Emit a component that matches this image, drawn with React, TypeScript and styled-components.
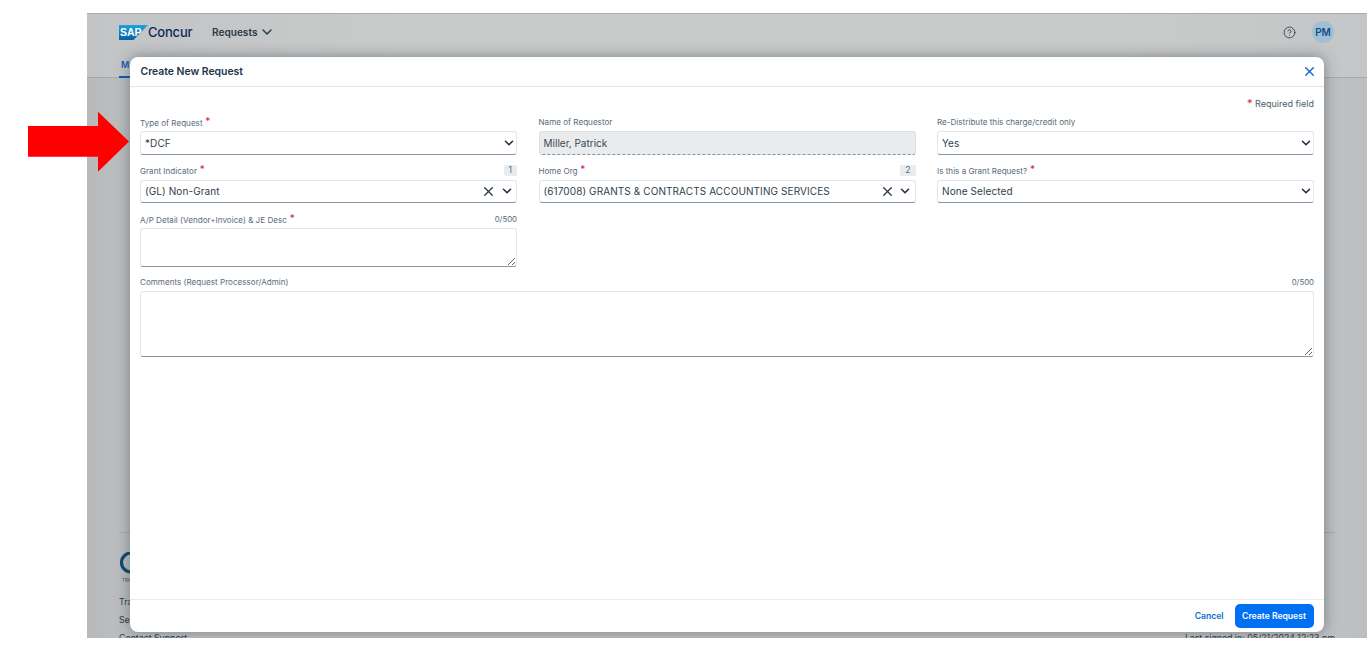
import React from "react";
import styled, { createGlobalStyle } from "styled-components";
import { ChevronDown, X, CircleHelp } from "lucide-react";

const GlobalStyle = createGlobalStyle`
    html, body {
        margin: 0;
        padding: 0;
        background: #ffffff;
        font-family: "Inter", "Liberation Sans", sans-serif;
    }
`;

const Field = ({
    label,
    required,
    note,
    children,
}: {
    label: string;
    required?: boolean;
    note?: React.ReactNode;
    children: React.ReactNode;
}) => (
    <FieldWrap>
        <LabelRow>
            <Label>
                {label}
                {required && <Star> *</Star>}
            </Label>
            {note}
        </LabelRow>
        {children}
    </FieldWrap>
);

const Select = ({ value, clearable }: { value: string; clearable?: boolean }) => (
    <SelectBox $clearable={clearable}>
        <SelectValue>{value}</SelectValue>
        {clearable && <X size={15} strokeWidth={2} color="#223548" />}
        <ChevronDown size={14} strokeWidth={2.8} color="#223548" />
    </SelectBox>
);

export default function App() {
    return (
        <>
            <GlobalStyle />
            <Page>
                <Frame>
                    <Header>
                        <TopBar>
                            <Brand>
                                <svg width="29" height="15" viewBox="0 0 29 15">
                                    <defs>
                                        <linearGradient id="sapBlue" x1="0" y1="0" x2="0" y2="1">
                                            <stop offset="0" stopColor="#1aa3e0" />
                                            <stop offset="1" stopColor="#0a5fa8" />
                                        </linearGradient>
                                    </defs>
                                    <polygon points="0,0 29,0 14.5,15 0,15" fill="url(#sapBlue)" />
                                    <text x="1" y="11" fontSize="10.5" fontWeight="700" fontFamily="Liberation Sans" fill="#ffffff">
                                        SAP
                                    </text>
                                </svg>
                                <BrandName>Concur</BrandName>
                            </Brand>
                            <NavMenu>
                                Requests
                                <ChevronDown size={16} strokeWidth={2.2} />
                            </NavMenu>
                            <TopRight>
                                <CircleHelp size={13} strokeWidth={1.6} color="#2b3a45" />
                                <Avatar>PM</Avatar>
                            </TopRight>
                        </TopBar>
                        <Tabs>
                            <Tab>My Requests</Tab>
                        </Tabs>
                    </Header>
                    <Main />
                    <Footer>
                        <FooterLogo>
                            <svg width="44" height="23" viewBox="0 0 44 23">
                                <circle cx="12" cy="10.5" r="9.5" fill="none" stroke="#0c4a6e" strokeWidth="3.2" />
                            </svg>
                            <LogoCaption>TRAVEL</LogoCaption>
                        </FooterLogo>
                        <FooterLink>Travel</FooterLink>
                        <FooterLink>Security</FooterLink>
                        <FooterBottom>
                            <FooterLink>Contact Support</FooterLink>
                            <FooterLink>Last signed in: 05/21/2024 12:23 pm</FooterLink>
                        </FooterBottom>
                    </Footer>

                    <Modal>
                        <ModalHeader>
                            <ModalTitle>Create New Request</ModalTitle>
                            <X size={15} strokeWidth={2.2} color="#0a6ed1" />
                        </ModalHeader>
                        <ModalBody>
                            <RequiredNote>
                                <RedStar>*</RedStar> Required field
                            </RequiredNote>
                            <FormGrid>
                                <Field label="Type of Request" required>
                                    <Select value="*DCF" />
                                </Field>
                                <Field label="Name of Requestor">
                                    <ReadOnlyBox>Miller, Patrick</ReadOnlyBox>
                                </Field>
                                <Field label="Re-Distribute this charge/credit only">
                                    <Select value="Yes" />
                                </Field>
                                <Field label="Grant Indicator" required note={<Count>1</Count>}>
                                    <Select value="(GL) Non-Grant" clearable />
                                </Field>
                                <Field label="Home Org" required note={<Count>2</Count>}>
                                    <Select value="(617008) GRANTS & CONTRACTS ACCOUNTING SERVICES" clearable />
                                </Field>
                                <Field label="Is this a Grant Request?" required>
                                    <Select value="None Selected" />
                                </Field>
                                <Field label="A/P Detail (Vendor+Invoice) & JE Desc" required note={<Chars>0/500</Chars>}>
                                    <TextBox $height={38.5} />
                                </Field>
                            </FormGrid>
                            <Field label="Comments (Request Processor/Admin)" note={<Chars>0/500</Chars>}>
                                <TextBox $height={65.5} />
                            </Field>
                        </ModalBody>
                        <ModalFooter>
                            <CancelLink>Cancel</CancelLink>
                            <PrimaryButton>Create Request</PrimaryButton>
                        </ModalFooter>
                    </Modal>
                </Frame>
                <Arrow width="104" height="64" viewBox="0 0 104 64">
                    <polygon points="0,16 70,16 70,1.7 101,31.6 70,61.7 70,46.7 0,46.7" fill="#ff0000" />
                </Arrow>
            </Page>
        </>
    );
}

const Page = styled.div`
    position: relative;
    width: 1371px;
    height: 646px;
    padding: 13px 4px 8px 87px;
    box-sizing: border-box;
    overflow: hidden;
`;

const Arrow = styled.svg`
    position: absolute;
    left: 28px;
    top: 110px;
`;

const Frame = styled.div`
    position: relative;
    display: flex;
    flex-direction: column;
    height: 625px;
    overflow: hidden;
    background: linear-gradient(90deg, #b7b9bb 0%, #c0c2c3 6%, #c0c2c3 94%, #bcbec0 100%);
    border-top: 1px solid #a9abad;
    box-sizing: border-box;
`;

const Header = styled.header`
    height: 64px;
    flex-shrink: 0;
    box-sizing: border-box;
    padding: 0 33px 0 32px;
    background: linear-gradient(90deg, #c2c4c5 0%, #c9caca 25%, #c9caca 80%, #c4c6c7 100%);
    border-bottom: 1px solid #a6a9ab;
    display: flex;
    flex-direction: column;
`;

const TopBar = styled.div`
    display: flex;
    align-items: center;
    height: 36px;
    flex-shrink: 0;
`;

const Brand = styled.div`
    display: flex;
    align-items: center;
    width: 93px;
`;

const BrandName = styled.span`
    font-size: 13px;
    font-weight: 500;
    color: #0b2a5b;
    letter-spacing: -0.2px;
`;

const NavMenu = styled.div`
    display: flex;
    align-items: center;
    gap: 1.5px;
    font-size: 10.1px;
    font-weight: 600;
    color: #2b3a45;
`;

const TopRight = styled.div`
    margin-left: auto;
    display: flex;
    align-items: center;
    gap: 16px;
`;

const Avatar = styled.div`
    width: 22px;
    height: 22px;
    border-radius: 50%;
    background: #9fc0d4;
    color: #0f4c8f;
    font-size: 10px;
    font-weight: 600;
    display: flex;
    align-items: center;
    justify-content: center;
`;

const Tabs = styled.nav`
    display: flex;
    flex: 1;
`;

const Tab = styled.div`
    font-size: 9px;
    font-weight: 600;
    color: #0a5bb5;
    padding: 9px 2px 0;
    border-bottom: 2px solid #0a5bb5;
    margin-bottom: -1px;
`;

const Main = styled.main`
    flex: 1;
`;

const Footer = styled.footer`
    flex-shrink: 0;
    height: 106px;
    margin: 0 32px;
    border-top: 1px solid #a6a9ab;
    padding-top: 19px;
    box-sizing: border-box;
    font-size: 8.75px;
    color: #2b3a45;
`;

const FooterLogo = styled.div`
    display: flex;
    flex-direction: column;
    height: 41px;
`;

const LogoCaption = styled.span`
    font-size: 4.5px;
    color: #33566e;
    padding-left: 3px;
    margin-top: 2.5px;
`;

const FooterLink = styled.div`
    height: 18px;
    line-height: 18px;
`;

const FooterBottom = styled.div`
    display: flex;
    justify-content: space-between;
`;

const Modal = styled.section`
    position: absolute;
    left: 43px;
    top: 43px;
    width: 1194px;
    height: 575px;
    background: #ffffff;
    border-radius: 8px;
    box-shadow: 0 0 14px rgba(50, 60, 70, 0.5);
    display: flex;
    flex-direction: column;
`;

const ModalHeader = styled.div`
    height: 30px;
    flex-shrink: 0;
    box-sizing: border-box;
    padding: 0 7.5px 0 10.5px;
    border-bottom: 1px solid #e3e6e8;
    display: flex;
    align-items: center;
    justify-content: space-between;
`;

const ModalTitle = styled.h2`
    margin: 0;
    font-size: 10.4px;
    font-weight: 600;
    color: #223548;
`;

const ModalBody = styled.div`
    flex: 1;
    padding: 10px 10px 0;
    display: flex;
    flex-direction: column;
    gap: 7.5px;
`;

const RequiredNote = styled.div`
    text-align: right;
    font-size: 9px;
    line-height: 13px;
    height: 9.5px;
    color: #4d5b66;
`;

const RedStar = styled.span`
    color: #d0312d;
    font-size: 11px;
`;

const FormGrid = styled.div`
    display: grid;
    grid-template-columns: repeat(3, 377px);
    justify-content: space-between;
    row-gap: 8px;
`;

const FieldWrap = styled.div`
    display: flex;
    flex-direction: column;
`;

const LabelRow = styled.div`
    display: flex;
    align-items: center;
    justify-content: space-between;
    height: 15px;
    margin-bottom: 2px;
`;

const Label = styled.label`
    font-size: 8.1px;
    color: #5b6b7a;
`;

const Star = styled.span`
    color: #d6126e;
    font-size: 10px;
    position: relative;
    top: -1px;
`;

const Count = styled.span`
    font-size: 8.5px;
    color: #556b7d;
    background: #e9ecef;
    border-radius: 2px;
    padding: 0 5px;
    height: 11px;
    line-height: 11px;
`;

const Chars = styled.span`
    font-size: 7.8px;
    color: #5b6b7a;
`;

const SelectBox = styled.div<{ $clearable?: boolean }>`
    height: 23.5px;
    box-sizing: border-box;
    padding: 0 ${(p) => (p.$clearable ? "2.5px" : "0")} 0 4px;
    display: flex;
    align-items: center;
    gap: 3.5px;
    background: #ffffff;
    border: 1px solid #e3e7ea;
    border-bottom: 1px solid #8596a6;
    border-radius: 3px;
`;

const SelectValue = styled.span`
    flex: 1;
    font-size: 10px;
    color: #2f3e4b;
    letter-spacing: 0.1px;
`;

const ReadOnlyBox = styled.div`
    height: 23.5px;
    box-sizing: border-box;
    padding: 0 4px;
    display: flex;
    align-items: center;
    font-size: 10px;
    color: #3c4852;
    background: #e9ebed;
    border: 1px solid #dde1e4;
    border-bottom: 1px dashed #8596a6;
    border-radius: 3px;
`;

const TextBox = styled.textarea<{ $height: number }>`
    display: block;
    width: 100%;
    height: ${(p) => p.$height}px;
    box-sizing: border-box;
    margin: 0;
    background: #ffffff;
    border: 1px solid #e3e7ea;
    border-bottom: 1px solid #8596a6;
    border-radius: 3px;
    outline: none;
`;

const ModalFooter = styled.div`
    height: 33.5px;
    flex-shrink: 0;
    box-sizing: border-box;
    padding: 0 10.5px 0 0;
    border-top: 1px solid #e9ebed;
    display: flex;
    align-items: center;
    justify-content: flex-end;
    gap: 11px;
`;

const CancelLink = styled.a`
    font-size: 8.6px;
    font-weight: 600;
    color: #0a6ed1;
`;

const PrimaryButton = styled.button`
    width: 79px;
    height: 24px;
    padding: 0;
    border: none;
    border-radius: 5px;
    background: #0070f2;
    color: #ffffff;
    font-family: inherit;
    font-size: 8.6px;
    font-weight: 600;
`;
